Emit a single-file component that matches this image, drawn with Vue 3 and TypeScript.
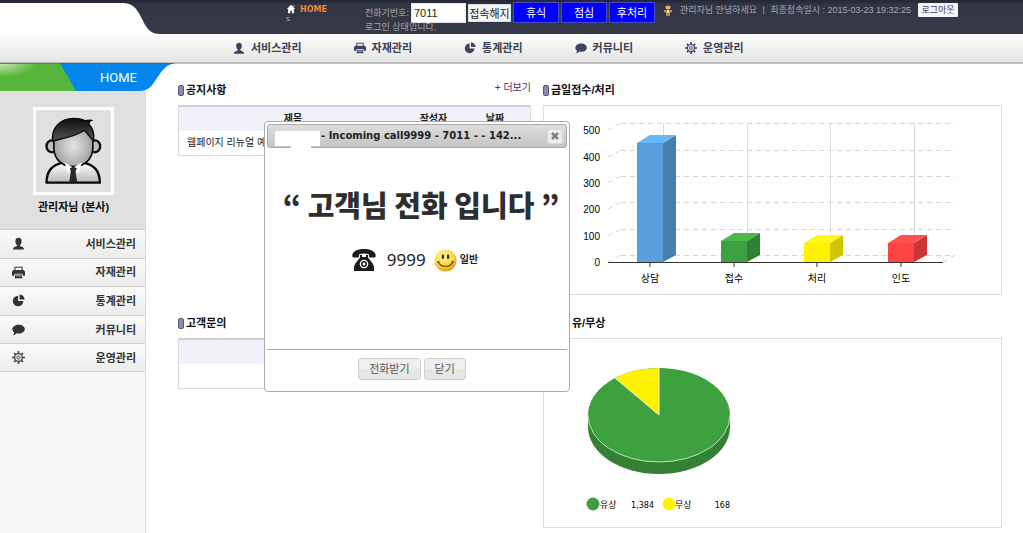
<script setup lang="ts">
interface MenuItem {
  icon: string
  label: string
}
interface Bar {
  label: string
  x: number
  top: number
  front: string
  side: string
  cap: string
}

const menu: MenuItem[] = [
  { icon: 'user', label: '서비스관리' },
  { icon: 'printer', label: '자재관리' },
  { icon: 'chart', label: '통계관리' },
  { icon: 'talk', label: '커뮤니티' },
  { icon: 'gear', label: '운영관리' },
]

const states: string[] = ['휴식', '점심', '후처리']

const bars: Bar[] = [
  { label: '상담', x: 637, top: 143, front: '#599fdc', side: '#467fae', cap: '#66b7fb' },
  { label: '접수', x: 721, top: 241, front: '#3fa03f', side: '#328032', cap: '#49b949' },
  { label: '처리', x: 804, top: 243, front: '#fff200', side: '#d0c600', cap: '#fff61a' },
  { label: '인도', x: 888, top: 243, front: '#ff4444', side: '#cc3535', cap: '#ff4f4f' },
]

const levels = [0, 100, 200, 300, 400, 500].map((value) => ({
  value,
  y: 262 - Math.round(value * 0.263),
}))
</script>

<template>
  <svg class="symbols" aria-hidden="true">
    <symbol id="i-user" viewBox="0 0 16 16">
      <path d="M8 1C5.3 1 4 2.800 4.200 5.400 4.300 7.600 5 9 6.200 10v1.200C4 12 1.500 12.400 1 15.500h14c-.5-3.100-3-3.500-5.200-4.300V10C11 9 11.700 7.600 11.800 5.400 12 2.800 10.700 1 8 1z" />
    </symbol>
    <symbol id="i-printer" viewBox="0 0 16 16">
      <path fill-rule="evenodd" d="M3 1h10v4h1.500L16 7v5h-2.500l-.8-2.500H3.300L2.500 12H0V7l1.500-2H3zm1.300 1.300V5h7.400V2.300zM4.200 10.500h7.600l1 4.500H3.200zm1 1.200-.2 1h6l-.2-1z" />
    </symbol>
    <symbol id="i-chart" viewBox="0 0 16 16">
      <path d="M7.500 2v6.500H14A6.500 6.500 0 1 1 7.500 2zM9.300.5a6.300 6.300 0 0 1 6.200 6.300H9.300z" />
    </symbol>
    <symbol id="i-talk" viewBox="0 0 16 16">
      <path d="M8.300 2c4.200 0 7.500 2.300 7.500 5.500S12.500 13 8.300 13c-.9 0-1.700-.1-2.500-.3C4.600 14 3 14.800 1.300 15c.8-1 1.300-2 1.200-3.500C1 10.500.5 9 .5 7.500.5 4.300 4 2 8.300 2z" />
    </symbol>
    <symbol id="i-gear" viewBox="0 0 16 16">
      <g fill="none" stroke="currentColor">
        <circle cx="8" cy="8" r="4.700" stroke-width="1.600" />
        <circle cx="8" cy="8" r="2" stroke-width="1.200" />
        <path stroke-width="2" d="M8 0v3M8 13v3M0 8h3M13 8h3M2.500 2.500l2 2M11.500 11.500l2 2M13.500 2.500l-2 2M4.500 11.500l-2 2" />
      </g>
    </symbol>
  </svg>

  <div class="page">
    <header class="top">
      <svg class="logo-tab" viewBox="0 0 160 34" aria-hidden="true">
        <path fill="#fff" d="M0 3H122C133 3 137 9 141 17 146 27 149 34 160 34H0z" />
      </svg>
      <a class="home" href="#">
        <svg viewBox="0 0 12 12" aria-hidden="true"><path fill="#fff" d="M6 1l5 5H9.500v5h-2.500V8H5v3H2.500V6H1z" /><path fill="#c8c8c8" d="M8.500 1.500H10V4L8.500 3z" /></svg>
        <span>HOME</span>
        <small>s</small>
      </a>
      <form class="phone" @submit.prevent>
        <div class="phone-row">
          <label for="ext">전화기번호:</label>
          <input id="ext" type="text" value="7011" />
          <button class="release" type="button">접속해지</button>
          <button v-for="s in states" :key="s" class="state" type="button">{{ s }}</button>
        </div>
        <p>로그인 상태입니다.</p>
      </form>
      <div class="account">
        <svg viewBox="0 0 10 12" aria-hidden="true"><circle cx="5" cy="3" r="2.500" fill="#e8b98a" /><path fill="#5a3a28" d="M2.500 2.500C2.500-.5 7.500-.5 7.500 2.500L5 1.800z" /><path fill="#b08848" d="M1 6h8v2.500H7V12H3V8.500H1z" /><path fill="#e9dcc8" d="M4 6h2v3H4z" /></svg>
        <span>관리자님 안녕하세요 ㅣ 최종접속일시 : 2015-03-23 19:32:25</span>
        <button type="button">로그아웃</button>
      </div>
    </header>

    <nav class="nav">
      <a v-for="m in menu" :key="m.icon" href="#">
        <svg aria-hidden="true"><use :href="'#i-' + m.icon" /></svg>{{ m.label }}
      </a>
    </nav>

    <div class="body">
      <aside class="side">
        <div class="banner">
          <svg viewBox="0 0 176 28" aria-hidden="true">
            <defs>
              <radialGradient id="shine" cx="0" cy="0" r="0.5">
                <stop offset="0" stop-color="#c9eab5" />
                <stop offset="1" stop-color="#56b53a" />
              </radialGradient>
            </defs>
            <path fill="url(#shine)" d="M0 0H61L77 28H0z" />
            <path fill="#0486ea" d="M60 0H176C166 1 162 8 157 15 152 23 148 28 140 28H76z" />
            <path fill="#48963a" d="M0 0H60V1H0z" />
            <path fill="#1273c4" d="M60 0H173V1H60z" />
          </svg>
          <span>HOME</span>
        </div>
        <div class="profile">
          <svg viewBox="100 50 242 264" role="img" aria-label="프로필">
            <defs>
              <radialGradient id="face" cx="0.500" cy="0.550" r="0.550">
                <stop offset="0" stop-color="#e6e6e6" />
                <stop offset="1" stop-color="#9a9a9a" />
              </radialGradient>
              <linearGradient id="hair" x1="0" y1="0" x2="0" y2="1">
                <stop offset="0" stop-color="#0c0c0c" />
                <stop offset="1" stop-color="#555" />
              </linearGradient>
              <linearGradient id="shirt" x1="0" y1="0" x2="0" y2="1">
                <stop offset="0" stop-color="#fff" />
                <stop offset="1" stop-color="#b8b8b8" />
              </linearGradient>
            </defs>
            <path fill="#fff" d="M100 50H342V314H100z" />
            <path fill="#e0e0e0" d="M109 59H333V305H109z" />
            <path fill="url(#shirt)" stroke="#0a0a0a" stroke-width="7" stroke-linejoin="round" d="M140 277C140 240 158 224 190 216H250C282 224 300 240 300 277z" />
            <g fill="#bdbdbd" stroke="#0a0a0a" stroke-width="7">
              <ellipse cx="156" cy="168" rx="16" ry="18" />
              <ellipse cx="285" cy="168" rx="16" ry="18" />
            </g>
            <path fill="url(#face)" stroke="#0a0a0a" stroke-width="5" d="M162 145C162 75 279 75 279 145V172C278 210 250 229 220 229S163 210 162 172z" />
            <path fill="#fff" d="M194 216L220 232 205 250zM246 216L220 232 236 250z" />
            <path fill="#2b2b2b" d="M210 234L220 229 231 234 227 244 232 276H208L213 244z" />
            <path fill="url(#hair)" stroke="#0a0a0a" stroke-width="4" d="M158 152C154 110 184 84 222 84 238 84 248 87 256 91 264 90 270 88 275 90 269 92 266 98 268 102 281 116 284 132 281 152 268 139 261 128 254 120 230 138 190 145 158 152z" />
          </svg>
          <strong>관리자님 (본사)</strong>
        </div>
        <ul class="side-menu">
          <li v-for="m in menu" :key="m.icon">
            <a href="#"><svg aria-hidden="true"><use :href="'#i-' + m.icon" /></svg>{{ m.label }}</a>
          </li>
        </ul>
      </aside>

      <main class="main">
        <section>
          <div class="head"><h2>공지사항</h2><a href="#">+ 더보기</a></div>
          <table>
            <thead><tr><th>제목</th><th>작성자</th><th>날짜</th></tr></thead>
            <tbody><tr><td>웹페이지 리뉴얼 예</td><td></td><td></td></tr></tbody>
          </table>
        </section>

        <section>
          <div class="head"><h2>금일접수/처리</h2></div>
          <div class="panel">
            <svg viewBox="544 106 457 188" preserveAspectRatio="xMinYMin meet" role="img" aria-label="금일접수/처리">
              <g fill="none" stroke="#d6d6d6" stroke-dasharray="5 4">
                <path v-for="l in levels" :key="l.value" :d="`M608 ${l.y}L621 ${l.y - 7}`" />
                <path v-for="l in levels" :key="'b' + l.value" :d="`M621 ${l.y - 7}H955`" shape-rendering="crispEdges" />
                <path d="M943 262L955 255" />
              </g>
              <g class="labels-y">
                <text v-for="l in levels" :key="l.value" x="600" :y="l.y + 4">{{ l.value }}</text>
              </g>
              <g v-for="b in bars" :key="b.label">
                <path stroke="#dcdcdc" shape-rendering="crispEdges" :d="`M${b.x + 26} 123V255`" />
                <path :fill="b.front" :d="`M${b.x} ${b.top}h26V262h-26z`" />
                <path :fill="b.side" :d="`M${b.x + 26} ${b.top}l13 -8V255l-13 7z`" />
                <path :fill="b.cap" :d="`M${b.x} ${b.top}l13 -8h26l-13 8z`" />
                <path stroke="#333" :d="`M${b.x + 13} 262v5`" />
                <text class="label-x" :x="b.x + 13" y="282">{{ b.label }}</text>
              </g>
              <path fill="#333" d="M608 262H943V263H608z" />
            </svg>
          </div>
        </section>

        <section>
          <div class="head"><h2>고객문의</h2></div>
          <table>
            <thead><tr><th></th><th></th><th></th></tr></thead>
            <tbody><tr><td></td><td></td><td></td></tr></tbody>
          </table>
        </section>

        <section>
          <div class="head"><h2 class="indent">유/무상</h2></div>
          <div class="panel">
            <svg viewBox="544 339 457 188" preserveAspectRatio="xMinYMin meet" role="img" aria-label="유/무상">
              <path fill="#348034" d="M588 415V427A71 47 0 0 0 730 427V415z" />
              <ellipse cx="659" cy="415" rx="71" ry="47" fill="#3fa03f" />
              <path fill="none" stroke="#b5e8b0" d="M588 415A71 47 0 0 0 730 415" />
              <path fill="#fff200" d="M659 415L615 378A71 47 0 0 1 659 368z" />
              <path fill="none" stroke="#f4f8d0" d="M615 378L659 415V368" />
              <circle cx="593" cy="504" r="6.500" fill="#3fa03f" />
              <circle cx="669" cy="504" r="6.500" fill="#fff200" />
              <g class="legend">
                <text x="600" y="508">유상</text>
                <text x="675" y="508">무상</text>
                <text class="num" x="654" y="508">1,384</text>
                <text class="num" x="730" y="508">168</text>
              </g>
            </svg>
          </div>
        </section>
      </main>
    </div>

    <div class="dialog" role="dialog" aria-labelledby="call-title">
      <div class="dialog-bar">
        <span class="mask"></span>
        <span id="call-title" class="dialog-title">- Incoming call9999 - 7011 - - 142...</span>
        <button type="button" aria-label="닫기">
          <svg viewBox="0 0 8 8" aria-hidden="true"><path stroke="#808080" stroke-width="2.500" d="M1 1l6 6M7 1l-6 6" /></svg>
        </button>
      </div>
      <div class="dialog-body">
        <h1>“ 고객님 전화 입니다 ”</h1>
        <div class="caller">
          <svg class="tel" viewBox="0 0 24 24" aria-hidden="true">
            <path fill="#1c1c1c" d="M12 1C5 1 .5 3.500.3 7.500.3 9 1 9.500 2 9.500h3.500C6.500 9.500 7 9 7 8V6.500C10 5.300 14 5.300 17 6.500V8c0 1 .5 1.500 1.500 1.500H22c1 0 1.700-.5 1.700-2C23.500 3.500 19 1 12 1z" />
            <path fill="#1c1c1c" d="M8 7h2v2h4V7h2v2.500l5 6.500 1 3v4H2v-4l1-3 5-6.500z" />
            <circle cx="12" cy="16" r="4.300" fill="#fff" />
            <circle cx="12" cy="16" r="3" fill="#1c1c1c" />
            <circle cx="12" cy="16" r="1.500" fill="#fff" />
          </svg>
          <span class="number">9999</span>
          <svg class="smile" viewBox="0 0 24 24" aria-hidden="true">
            <defs>
              <radialGradient id="smile" cx="0.400" cy="0.300" r="0.750">
                <stop offset="0" stop-color="#fff6a8" />
                <stop offset="0.600" stop-color="#fbd83c" />
                <stop offset="1" stop-color="#d9920c" />
              </radialGradient>
            </defs>
            <circle cx="12" cy="12" r="11.500" fill="url(#smile)" />
            <ellipse cx="9.300" cy="8" rx="1.300" ry="2.600" fill="#4a2c08" />
            <ellipse cx="14.700" cy="8" rx="1.300" ry="2.600" fill="#4a2c08" />
            <path fill="none" stroke="#6a3d0a" stroke-width="1.300" stroke-linecap="round" d="M4.500 13.500C7 19.500 17 19.500 19.500 13.500M3.800 13.800l1.400-.8M18.800 13l1.400.8" />
          </svg>
          <b>일반</b>
        </div>
      </div>
      <div class="dialog-foot">
        <button type="button">전화받기</button>
        <button type="button">닫기</button>
      </div>
    </div>
  </div>
</template>

<style>
body {
  background: #fff;
}
</style>

<style scoped>
* {
  box-sizing: border-box;
}
.symbols {
  position: absolute;
  width: 0;
  height: 0;
}
.page {
  position: relative;
  display: flex;
  flex-direction: column;
  min-height: 100vh;
  overflow: hidden;
  font: 11px/16px 'Liberation Sans', 'Noto Sans CJK KR', sans-serif;
  color: #222;
}
a {
  color: inherit;
  text-decoration: none;
}
button,
input {
  margin: 0;
  padding: 0;
  font: inherit;
}
h1,
h2,
p,
ul {
  margin: 0;
  padding: 0;
}
.top {
  position: relative;
  display: flex;
  align-items: flex-start;
  height: 34px;
  padding: 2px 0 0 286px;
  background: linear-gradient(#232735, #323644 5px, #353948);
  color: #a4a7b0;
  font-size: 9px;
  white-space: nowrap;
}
.logo-tab {
  position: absolute;
  left: 0;
  top: 0;
  width: 160px;
  height: 34px;
}
.home {
  display: grid;
  grid-template-columns: 10px 1fr;
  column-gap: 4px;
  width: 79px;
  padding-top: 2px;
  line-height: 12px;
}
.home svg {
  width: 10px;
  height: 10px;
}
.home span {
  font: bold 8px/12px 'DejaVu Sans', sans-serif;
  color: #f5862a;
}
.home small {
  font-size: 8px;
  line-height: 6px;
}
.phone-row {
  display: flex;
  gap: 2px;
  height: 21px;
  align-items: center;
}
.phone-row label {
  width: 44px;
}
.phone-row input {
  width: 55px;
  height: 20px;
  padding: 0 2px;
  border: 1px solid #e8e8e8;
  background: #fff;
  color: #222;
  font-size: 11px;
}
.phone-row button {
  width: 46px;
  height: 21px;
  border: 1px solid #4a4ac8;
  background: #00f;
  color: #fff;
  font-size: 11px;
  line-height: 18px;
}
.phone-row .release {
  width: 43px;
  height: 18px;
  border-color: #ddd;
  background: #f4f4f4;
  color: #222;
}
.phone p {
  line-height: 9px;
}
.account {
  display: flex;
  align-items: center;
  gap: 7px;
  height: 16px;
  padding-left: 8px;
}
.account svg {
  width: 10px;
  height: 12px;
}
.account button {
  width: 40px;
  height: 14px;
  border: 0;
  border-radius: 1px;
  background: #f4f5fa;
  color: #3c4058;
  line-height: 14px;
}
.nav {
  display: flex;
  align-items: center;
  gap: 52px;
  height: 30px;
  padding-left: 233px;
  border-bottom: 2px solid #bdbdbd;
  background: linear-gradient(#fdfdfd, #e5e5e5);
  color: #3a4050;
  font-weight: bold;
  white-space: nowrap;
}
.nav a {
  display: flex;
  align-items: center;
  gap: 6px;
}
.nav svg {
  width: 12px;
  height: 12px;
  fill: #3c4662;
  color: #3c4662;
}
.body {
  display: flex;
  flex: 1;
}
.side {
  width: 146px;
  flex: none;
  border-right: 1px solid #dcdcdc;
  background: #f7f7f7;
}
.banner {
  position: relative;
  width: 176px;
  height: 27px;
  padding-right: 39px;
  color: #fff;
  font: 13px/27px Roboto, sans-serif;
  text-align: right;
}
.banner svg {
  position: absolute;
  left: 0;
  top: -1px;
  width: 176px;
  height: 28px;
}
.banner span {
  position: relative;
}
.profile {
  display: flex;
  flex-direction: column;
  align-items: center;
  gap: 4px;
  height: 138px;
  padding: 16px 0 0 2px;
  background: #e0e0e0;
  color: #111;
}
.profile svg {
  width: 81px;
  height: 88px;
}
.side-menu {
  display: grid;
  grid-template-rows: repeat(5, 1fr);
  height: 143px;
  list-style: none;
}
.side-menu a {
  display: flex;
  align-items: center;
  justify-content: space-between;
  height: 100%;
  padding: 0 9px 0 12px;
  border-top: 1px solid #cfcfcf;
  background: linear-gradient(#fafafa, #ececec);
  color: #333;
  font-weight: bold;
}
.side-menu li:last-child a {
  border-bottom: 1px solid #cfcfcf;
}
.side-menu svg {
  width: 13px;
  height: 13px;
  fill: #333;
  color: #444;
}
.main {
  flex: 1;
  display: grid;
  grid-template-columns: 353fr 459fr;
  grid-auto-rows: max-content;
  gap: 19px 12px;
  padding: 17px 21px 0 32px;
}
.head {
  display: flex;
  justify-content: space-between;
  height: 24px;
}
.head h2 {
  display: flex;
  align-items: center;
  gap: 2px;
  height: 18px;
  font-size: 11px;
  color: #111;
}
.head h2::before {
  content: '';
  width: 4px;
  height: 9px;
  border: 1px solid #55587c;
  border-radius: 2px;
  background: #8a8cac;
}
.head h2.indent {
  padding-left: 29px;
}
.head h2.indent::before {
  display: none;
}
.head a {
  height: 14px;
  line-height: 14px;
  font-size: 10px;
  color: #5a2a6c;
}
.panel {
  height: 190px;
  border: 1px solid #ddd;
}
.panel svg {
  display: block;
  width: 100%;
  height: 188px;
}
table {
  width: 100%;
  border: 1px solid #dadae0;
  border-top: 2px solid #cfcfd6;
  border-collapse: separate;
  border-spacing: 0;
  table-layout: fixed;
  font-size: 10px;
}
th {
  height: 24px;
  padding: 0;
  background: #f1f1f9;
}
th:first-child {
  width: 65%;
}
th:nth-child(2) {
  width: 15%;
}
td {
  height: 24px;
  padding: 0 8px;
}
.labels-y text {
  font-family: 'Liberation Sans Narrow', 'Liberation Sans', sans-serif;
  font-size: 10px;
  text-anchor: end;
}
.label-x {
  font-size: 10px;
  text-anchor: middle;
}
.legend text {
  font-size: 9px;
}
.legend .num {
  font-family: 'DejaVu Sans', sans-serif;
  font-size: 8px;
  text-anchor: end;
}
.dialog {
  position: absolute;
  left: 264px;
  top: 121px;
  display: flex;
  flex-direction: column;
  width: 306px;
  height: 271px;
  padding: 2px;
  border: 1px solid #aaa;
  border-radius: 4px;
  background: #fff;
}
.dialog-bar {
  display: flex;
  align-items: center;
  gap: 1px;
  height: 24px;
  padding: 0 3px 0 7px;
  border: 1px solid #aaa;
  border-radius: 3px;
  background: linear-gradient(#dedede, #c4c4c4);
}
.mask {
  position: relative;
  width: 45px;
  height: 15px;
  margin-top: 5px;
  background: #fff;
}
.mask::after {
  content: '';
  position: absolute;
  left: 16px;
  top: 14px;
  width: 20px;
  height: 3px;
  background: #fff;
}
.dialog-title {
  flex: 1;
  font: bold 10px/20px 'DejaVu Sans', sans-serif;
  white-space: nowrap;
}
.dialog-bar button {
  display: grid;
  place-items: center;
  width: 16px;
  height: 15px;
  border: 1px solid #d8d8d8;
  border-radius: 2px;
  background: #ececec;
}
.dialog-bar button svg {
  width: 8px;
  height: 8px;
}
.dialog-body {
  flex: 1;
  padding-top: 34px;
  text-align: center;
}
.dialog-body h1 {
  padding-left: 8px;
  font: 900 29px/44px 'Noto Sans CJK KR', sans-serif;
  color: #2e2e2e;
  white-space: nowrap;
}
.caller {
  display: flex;
  align-items: center;
  justify-content: center;
  height: 26px;
  margin-top: 21px;
  padding-right: 4px;
  font-size: 10px;
}
.tel {
  width: 24px;
  height: 24px;
}
.number {
  margin: 0 8px 0 11px;
  font: 17px/24px 'Noto Sans', sans-serif;
}
.smile {
  width: 23px;
  height: 23px;
  margin-right: 3px;
}
.dialog-foot {
  display: flex;
  justify-content: center;
  gap: 3px;
  height: 40px;
  padding: 8px 10px 0 0;
  border-top: 1px solid #aaa;
}
.dialog-foot button {
  height: 22px;
  padding: 0 10px;
  border: 1px solid #d0d0d0;
  border-radius: 3px;
  background: linear-gradient(#efefef 50%, #e6e6e6 50%);
  color: #555;
  line-height: 20px;
}
</style>
